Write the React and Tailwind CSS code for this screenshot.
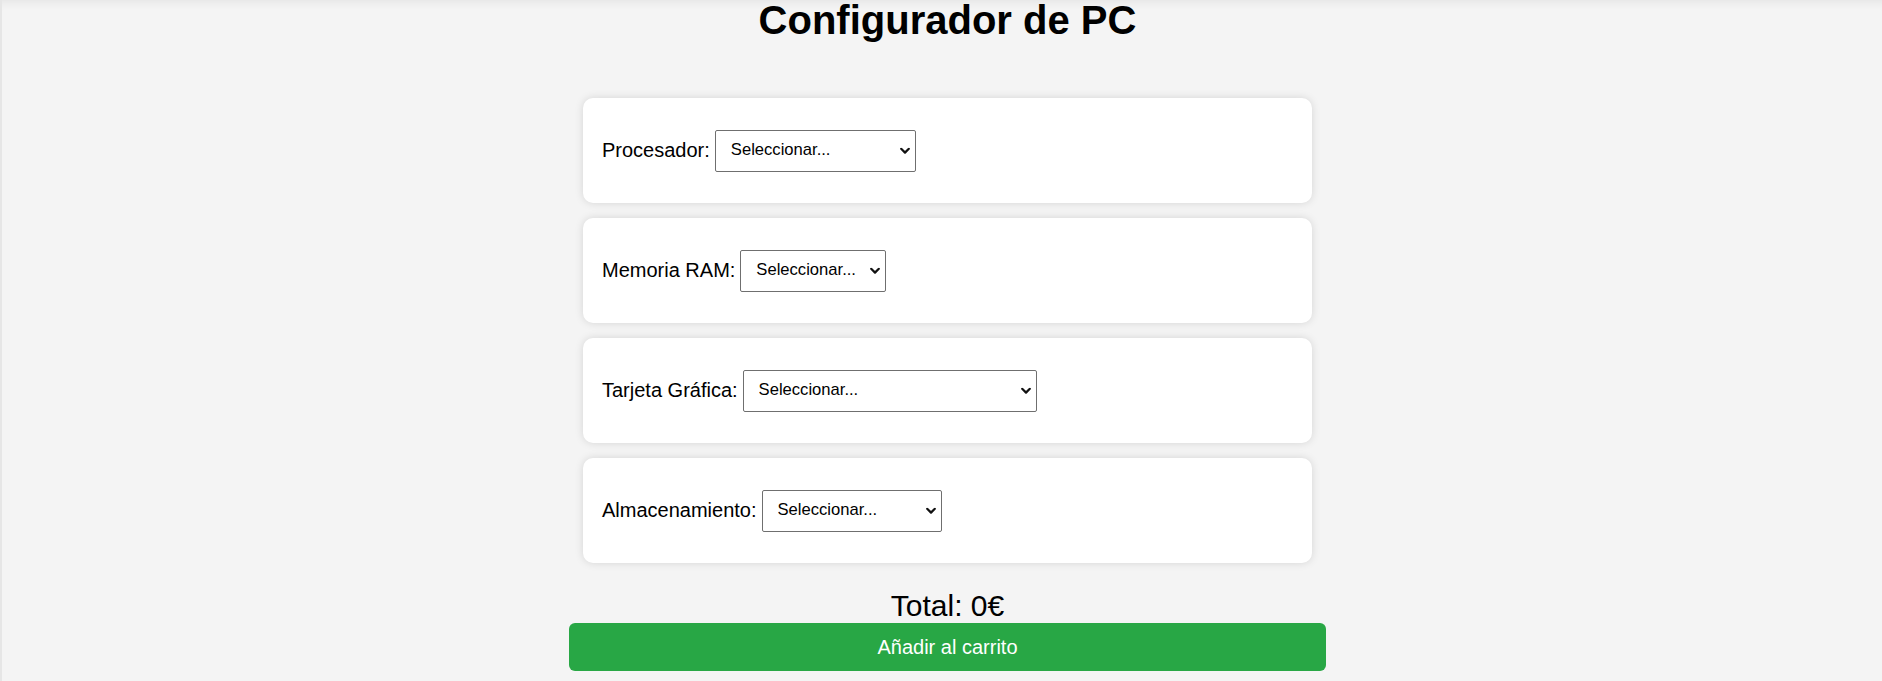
import React from 'react';

const parts = [
  { label: 'Procesador:', width: 'w-[201px]' },
  { label: 'Memoria RAM:', width: 'w-[146px]' },
  { label: 'Tarjeta Gráfica:', width: 'w-[294px]' },
  { label: 'Almacenamiento:', width: 'w-[180px]' },
];

const Chevron = () => (
  <svg className="pointer-events-none absolute right-[6px] top-1/2 -translate-y-1/2" width="10" height="7" viewBox="0 0 10 7" fill="none">
    <path d="M1.2 1.3 5 5.1 8.8 1.3" stroke="#111" strokeWidth="2.2" strokeLinecap="round" strokeLinejoin="round" />
  </svg>
);

const PartCard = ({ label, width }) => (
  <div className="flex h-[105px] items-center gap-[5px] rounded-[10px] bg-white px-[19px] shadow-[0_0_9px_rgba(0,0,0,0.13)]">
    <label className="text-[20px] leading-[23px]">{label}</label>
    <div className={`relative ${width}`}>
      <select className="h-[42px] w-full appearance-none rounded-[2px] border border-[#6f6f6f] bg-white pl-[15px] pr-6 text-[16.6px] text-black outline-none">
        <option>Seleccionar...</option>
      </select>
      <Chevron />
    </div>
  </div>
);

const App = () => (
  <div className="min-h-screen border-l-2 border-[#e6e6e6] bg-[#f4f4f4] pl-[11px] text-black shadow-[inset_0_10px_10px_-8px_rgba(0,0,0,0.07)] font-['Liberation_Sans',Arial,sans-serif]">
    <h1 className="text-center text-[40px] font-bold leading-none">Configurador de PC</h1>
    <div className="mx-auto mt-[58px] w-[757px]">
      <div className="mx-[14px] flex flex-col gap-[15px]">
        {parts.map((p) => (
          <PartCard key={p.label} label={p.label} width={p.width} />
        ))}
      </div>
      <p className="mt-[26px] text-center text-[30px] leading-[34px]">Total: 0€</p>
      <button className="h-[48px] w-full rounded-[6px] bg-[#28a745] text-[20px] text-white">Añadir al carrito</button>
    </div>
  </div>
);

export default App;
